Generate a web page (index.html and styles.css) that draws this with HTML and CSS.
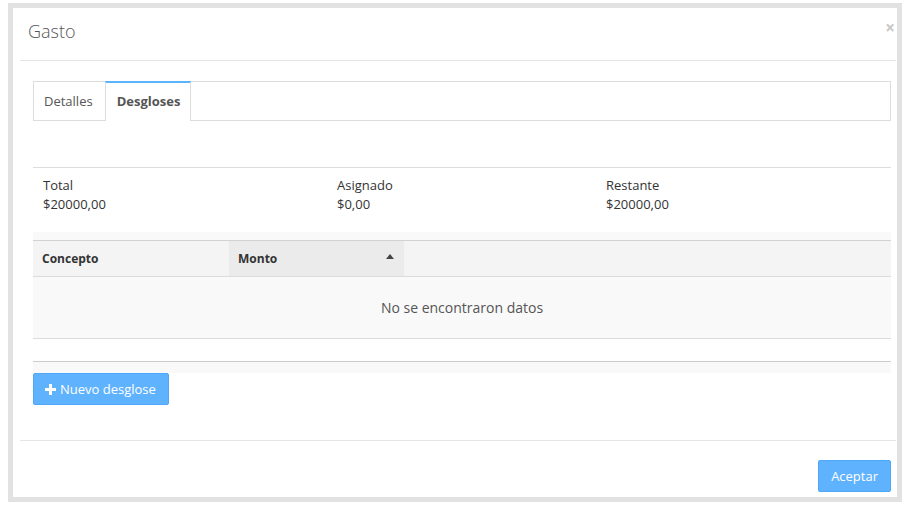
FILE: index.html
```html
<!DOCTYPE html>
<html lang="es">
<head>
  <meta charset="UTF-8">
  <title>Gasto</title>
  <link rel="stylesheet" href="styles.css">
</head>
<body>
  <div class="backdrop">
    <div class="modal">
      <div class="modal-header">
        <h4 class="modal-title">Gasto</h4>
        <span class="close">&times;</span>
      </div>

      <div class="modal-body">
        <div class="tabs">
          <a class="tab" href="#">Detalles</a>
          <a class="tab active" href="#">Desgloses</a>
        </div>

        <div class="summary">
          <div class="sum-col">
            <div>Total</div>
            <div>$20000,00</div>
          </div>
          <div class="sum-col">
            <div>Asignado</div>
            <div>$0,00</div>
          </div>
          <div class="sum-col">
            <div>Restante</div>
            <div>$20000,00</div>
          </div>
        </div>

        <div class="grid-wrap">
          <table class="grid">
            <thead>
              <tr>
                <th class="col-concepto">Concepto</th>
                <th class="col-monto sorted"><span>Monto</span><span class="sort-up"></span></th>
                <th></th>
              </tr>
            </thead>
            <tbody>
              <tr class="empty">
                <td colspan="3">No se encontraron datos</td>
              </tr>
            </tbody>
          </table>
          <div class="grid-footer"></div>
        </div>

        <button class="btn btn-primary">
          <svg class="plus" width="11" height="11" viewBox="0 0 11 11"><path d="M4 0h3v4h4v3H7v4H4V7H0V4h4z" fill="#fff"/></svg>
          Nuevo desglose
        </button>
      </div>

      <div class="modal-footer">
        <button class="btn btn-primary">Aceptar</button>
      </div>
    </div>
  </div>
</body>
</html>
```

FILE: styles.css
```css
body {
  margin: 0;
  font-family: "Open Sans", "Liberation Sans", sans-serif;
  font-size: 13px;
  color: #333;
  background: #fff;
}
.backdrop {
  padding: 3px 5px 3px 8px;
}
.modal {
  border: 5px solid #e2e2e2;
  background: #fff;
  height: 489px;
  display: flex;
  flex-direction: column;
}
.modal-header {
  display: flex;
  justify-content: space-between;
  margin: 0 1px 0 7px;
  padding: 10px 1px 16px 8px;
  border-bottom: 1px solid #e5e5e5;
}
.modal-title {
  margin: 0;
  font-size: 18px;
  font-weight: 300;
  line-height: 26px;
  color: #555;
}
.close {
  font-size: 17px;
  line-height: 14px;
  margin-top: 3px;
  color: #c8c8c8;
  font-weight: 700;
}
.modal-body {
  padding: 20px 6px 35px 20px;
  flex: 1;
}
.tabs {
  display: flex;
  height: 38px;
  border: 1px solid #ddd;
}
.tab {
  padding: 0 12px 0 10px;
  line-height: 38px;
  color: #555;
  text-decoration: none;
}
.tab.active {
  position: relative;
  margin: -1px 0 -1px 0;
  height: 38px;
  line-height: 37px;
  padding: 0 10px 0 11px;
  border-top: 2px solid #5cb3fd;
  border-left: 1px solid #ddd;
  border-right: 1px solid #ddd;
  background: #fff;
  font-weight: 700;
}
.summary {
  margin-top: 46px;
  border-top: 1px solid #ddd;
  padding: 8px 0 18px;
  display: grid;
  grid-template-columns: 294px 269px 1fr;
  line-height: 19px;
}
.sum-col {
  padding-left: 10px;
}
.grid-wrap {
  background: #f9f9f9;
  padding: 8px 0 11px;
}
.grid {
  width: 100%;
  border-collapse: collapse;
  border-top: 1px solid #d2d2d2;
}
.grid th {
  height: 35px;
  padding: 0 9px;
  text-align: left;
  font-size: 12px;
  font-weight: 700;
  color: #333;
  background: #f4f4f4;
  border-bottom: 1px solid #dcdcdc;
}
.grid th.col-concepto {
  width: 178px;
}
.grid th.col-monto {
  width: 157px;
  background: #ebebeb;
}
.sort-up {
  float: right;
  margin-top: 4px;
  margin-right: 1px;
  width: 0;
  height: 0;
  border-left: 4px solid transparent;
  border-right: 4px solid transparent;
  border-bottom: 5px solid #444;
}
.grid td {
  height: 59px;
  text-align: center;
  font-size: 14px;
  color: #555;
  border-bottom: 1px solid #dcdcdc;
}
.grid-footer {
  height: 22px;
  background: #fff;
  border-bottom: 1px solid #ccc;
}
.btn {
  font-family: inherit;
  font-size: 13px;
  color: #fff;
  border-radius: 2px;
  cursor: pointer;
  height: 32px;
}
.btn-primary {
  background: #5fb2fe;
  border: 1px solid #4ea7f8;
  padding: 0 12px;
}
.modal-body .btn {
  display: flex;
  align-items: center;
  gap: 4px;
  padding: 0 12px 0 11px;
}
.modal-footer {
  margin: 0 1px 0 7px;
  padding: 19px 5px 5px;
  border-top: 1px solid #e5e5e5;
  display: flex;
  justify-content: flex-end;
}
```
